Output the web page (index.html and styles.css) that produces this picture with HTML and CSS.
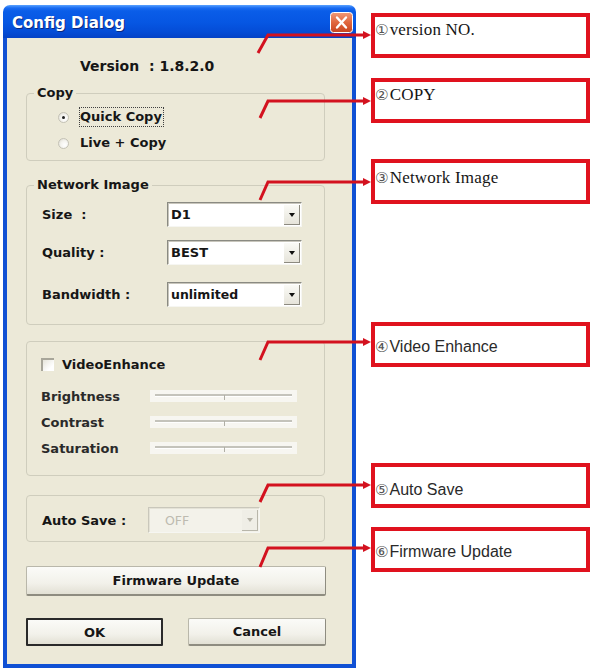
FILE: index.html
```html
<!DOCTYPE html>
<html>
<head>
<meta charset="utf-8">
<link rel="stylesheet" href="styles.css">
</head>
<body>
<div class="page">
  <div class="dialog">
    <div class="titlebar">
      <span class="title">Config Dialog</span>
      <span class="close">
        <svg width="23" height="21" viewBox="0 0 23 21">
          <defs>
            <linearGradient id="cg" x1="0" y1="0" x2="0" y2="1">
              <stop offset="0" stop-color="#f09a78"/>
              <stop offset="0.5" stop-color="#e0663e"/>
              <stop offset="1" stop-color="#c8451f"/>
            </linearGradient>
          </defs>
          <rect x="0.5" y="0.5" width="22" height="20" rx="3" fill="url(#cg)" stroke="#ffffff" stroke-width="1"/>
          <path d="M7 5.5 L16 15.5 M16 5.5 L7 15.5" stroke="#ffffff" stroke-width="2.4" stroke-linecap="round"/>
        </svg>
      </span>
    </div>
    <div class="body">
      <div class="version">Version&nbsp; : 1.8.2.0</div>

      <fieldset class="group group-copy">
        <legend>Copy</legend>
        <div class="copy-inner">
          <div class="radio-row"><span class="radio checked"></span><span class="focus">Quick Copy</span></div>
          <div class="radio-row"><span class="radio"></span><span class="radio-text">Live + Copy</span></div>
        </div>
      </fieldset>

      <fieldset class="group group-net">
        <legend>Network Image</legend>
        <div class="net-inner">
          <div class="net-row"><span class="net-label">Size&nbsp; :</span><span class="combo"><span class="combo-text">D1</span><span class="combo-btn"><span class="tri"></span></span></span></div>
          <div class="net-row"><span class="net-label">Quality :</span><span class="combo"><span class="combo-text">BEST</span><span class="combo-btn"><span class="tri"></span></span></span></div>
          <div class="net-row"><span class="net-label">Bandwidth :</span><span class="combo"><span class="combo-text small">unlimited</span><span class="combo-btn"><span class="tri"></span></span></span></div>
        </div>
      </fieldset>

      <div class="group group-video">
        <div class="check-row"><span class="checkbox"></span><span>VideoEnhance</span></div>
        <div class="slider-row"><span class="slider-label">Brightness</span><span class="slider"><span class="groove"></span><span class="thumb"></span></span></div>
        <div class="slider-row"><span class="slider-label">Contrast</span><span class="slider"><span class="groove"></span><span class="thumb"></span></span></div>
        <div class="slider-row"><span class="slider-label">Saturation</span><span class="slider"><span class="groove"></span><span class="thumb"></span></span></div>
      </div>

      <div class="group group-save">
        <span class="save-label">Auto Save :</span>
        <span class="combo combo-disabled"><span class="combo-text">OFF</span><span class="combo-btn"><span class="tri"></span></span></span>
      </div>

      <div class="btn btn-wide">Firmware Update</div>

      <div class="btn-row">
        <div class="btn btn-ok">OK</div>
        <div class="btn btn-cancel">Cancel</div>
      </div>
    </div>
  </div>

  <div class="callouts">
    <div class="callout c1 serif"><span class="num">①</span>version NO.</div>
    <div class="callout c2 serif"><span class="num">②</span>COPY</div>
    <div class="callout c3 serif"><span class="num">③</span>Network Image</div>
    <div class="callout c4 sans"><span class="num">④</span>Video Enhance</div>
    <div class="callout c5 sans"><span class="num">⑤</span>Auto Save</div>
    <div class="callout c6 sans"><span class="num">⑥</span>Firmware Update</div>
  </div>
</div>

<svg class="leaders" width="592" height="670" viewBox="0 0 592 670">
  <g fill="none" stroke="#d3121f" stroke-width="3" stroke-linejoin="miter">
    <polyline points="258,53 268,35 365,35"/>
    <polyline points="260,118 268,101 365,101"/>
    <polyline points="260,200 268,182 365,182"/>
    <polyline points="260,360 268,342 365,342"/>
    <polyline points="260,502 268,485 365,485"/>
    <polyline points="260,567 268,548 365,548"/>
  </g>
  <g fill="#d3121f">
    <polygon points="363,31 371,35 363,39"/>
    <polygon points="363,97 371,101 363,105"/>
    <polygon points="363,178 371,182 363,186"/>
    <polygon points="363,338 371,342 363,346"/>
    <polygon points="363,481 371,485 363,489"/>
    <polygon points="363,544 371,548 363,552"/>
  </g>
</svg>
</body>
</html>
```

FILE: styles.css
```css
* { box-sizing: border-box; }

html, body {
  margin: 0;
  padding: 0;
  background: #ffffff;
}

body {
  width: 592px;
  height: 670px;
  overflow: hidden;
  position: relative;
  font-family: "DejaVu Sans", sans-serif;
  font-size: 13px;
  font-weight: bold;
  color: #161616;
}

.page {
  display: flex;
  align-items: flex-start;
  padding: 5px 0 0 3px;
}

/* ---------- dialog ---------- */
.dialog {
  width: 353px;
  height: 663px;
  display: flex;
  flex-direction: column;
  flex: none;
}

.titlebar {
  height: 33px;
  flex: none;
  border-radius: 7px 7px 0 0;
  background: linear-gradient(to bottom, #5aa2ff 0px, #1a6cf2 3px, #0a5de8 6px, #0656e2 18px, #044cd6 27px, #0442c6 33px);
  display: flex;
  align-items: flex-start;
  justify-content: space-between;
  padding: 0 3px 0 9px;
}

.title {
  margin-top: 9px;
  font-size: 15px;
  line-height: 18px;
  color: #ffffff;
  text-shadow: 1px 1px 0 #0a2a80;
}

.close {
  margin-top: 7px;
  width: 23px;
  height: 21px;
  display: block;
}
.close svg { display: block; }

.body {
  flex: 1;
  background: #ece9d8;
  border: 4px solid #1050d4;
  border-top: none;
  padding: 0 0 0 19px;
  display: flex;
  flex-direction: column;
  align-items: flex-start;
}

.version {
  margin-top: 18px;
  margin-left: 54px;
  line-height: 20px;
  font-size: 14px;
}

/* ---------- group boxes ---------- */
.group {
  margin: 0;
  width: 299px;
  border: 1px solid #cfcdbd;
  border-radius: 4px;
  padding: 0;
  min-inline-size: 0;
}

.group legend {
  margin-left: 7px;
  padding: 0 3px;
  line-height: 16px;
  font-size: 13px;
}

.group-copy { margin-top: 9px; }

.copy-inner {
  padding: 3px 0 4px 31px;
}

.radio-row {
  height: 26px;
  display: flex;
  align-items: center;
}

.radio {
  width: 11px;
  height: 11px;
  border-radius: 50%;
  background: radial-gradient(circle at 65% 65%, #ffffff 0, #f4f3ee 50%, #d8d6cc 100%);
  border: 1px solid #c4c2b6;
  margin-right: 10px;
  position: relative;
  flex: none;
}
.radio.checked::after {
  content: "";
  position: absolute;
  left: 3px;
  top: 3px;
  width: 3px;
  height: 3px;
  border-radius: 50%;
  background: #202020;
}

.focus {
  border: 1px dotted #404040;
  line-height: 18px;
  padding: 0 1px 0 0;
}
.radio-text {
  margin-left: 1px;
  line-height: 18px;
}

.group-net { margin-top: 16px; }

.net-inner {
  padding: 9px 0 17px 15px;
  display: flex;
  flex-direction: column;
}
.net-row {
  display: flex;
  align-items: center;
  height: 25px;
}
.net-row + .net-row { margin-top: 13px; }
.net-row:last-child { margin-top: 17px; }

.net-label {
  width: 125px;
  flex: none;
}

/* ---------- combo boxes ---------- */
.combo {
  width: 135px;
  height: 25px;
  flex: none;
  display: flex;
  align-items: center;
  justify-content: space-between;
  background: #ffffff;
  border-top: 1px solid #8a8a82;
  border-left: 1px solid #8a8a82;
  border-right: 1px solid #f6f6f2;
  border-bottom: 1px solid #f6f6f2;
  box-shadow: inset 1px 1px 0 #c8c6bc;
  padding: 2px 1px 1px 3px;
}
.combo-text { line-height: 18px; }
.combo-text.small { font-size: 12.5px; }

.combo-btn {
  width: 16px;
  height: 20px;
  flex: none;
  background: linear-gradient(to bottom, #fafaf6, #e6e4da);
  border-right: 1px solid #8c8a80;
  border-bottom: 1px solid #8c8a80;
  display: flex;
  align-items: center;
  justify-content: center;
}
.tri {
  width: 0;
  height: 0;
  border-left: 3px solid transparent;
  border-right: 3px solid transparent;
  border-top: 4px solid #101010;
}

.combo-disabled {
  width: 112px;
  height: 26px;
  background: #f3f2ea;
  border-top: 1px solid #c9c7bb;
  border-left: 1px solid #c9c7bb;
  box-shadow: inset 1px 1px 0 #e4e2d6;
  padding-left: 16px;
}
.combo-disabled .combo-text {
  color: #bdbbb0;
  font-weight: normal;
  font-size: 12.5px;
}
.combo-disabled .combo-btn {
  height: 21px;
  background: #efeee6;
  border-right: 1px solid #b8b6aa;
  border-bottom: 1px solid #b8b6aa;
}
.combo-disabled .tri { border-top-color: #b4b2a6; }

/* ---------- video enhance ---------- */
.group-video {
  margin-top: 16px;
  padding: 12px 0 14px 14px;
}

.check-row {
  height: 20px;
  display: flex;
  align-items: center;
  margin-bottom: 9px;
}
.checkbox {
  width: 13px;
  height: 13px;
  flex: none;
  background: linear-gradient(135deg, #e6e4da, #ffffff 70%);
  border-top: 2px solid #a8a69a;
  border-left: 2px solid #a8a69a;
  margin-right: 8px;
}

.slider-row {
  height: 26px;
  display: flex;
  align-items: center;
}
.slider-label {
  width: 109px;
  flex: none;
  color: #2a2a2a;
}
.slider {
  position: relative;
  width: 147px;
  height: 12px;
  background: #f7f6f1;
}
.groove {
  position: absolute;
  left: 5px;
  right: 5px;
  top: 4px;
  height: 3px;
  border-top: 2px solid #c4c3bb;
  border-bottom: 1px solid #ffffff;
}
.thumb {
  position: absolute;
  left: 74px;
  top: 5px;
  width: 1px;
  height: 5px;
  background: #b0afa6;
}

/* ---------- auto save ---------- */
.group-save {
  margin-top: 19px;
  padding: 11px 0 8px 15px;
  display: flex;
  align-items: center;
}
.save-label {
  width: 106px;
  flex: none;
}

/* ---------- buttons ---------- */
.btn {
  display: flex;
  align-items: center;
  justify-content: center;
  background: linear-gradient(to bottom, #fbfbf8 0%, #f2f1ea 60%, #e2e0d4 100%);
  border: 1px solid #b9b7aa;
  border-right-color: #8e8c80;
  border-bottom: 2px solid #8e8c80;
  border-radius: 2px;
}
.btn-wide {
  margin-top: 24px;
  width: 300px;
  height: 30px;
}
.btn-row {
  margin-top: 22px;
  display: flex;
}
.btn-ok {
  width: 137px;
  height: 28px;
  border: 2px solid #2a2a2a;
  border-radius: 1px;
}
.btn-cancel {
  margin-left: 25px;
  width: 138px;
  height: 28px;
}

/* ---------- callouts ---------- */
.callouts {
  margin-left: 15px;
  margin-top: 8px;
  display: flex;
  flex-direction: column;
}
.callout {
  width: 219px;
  height: 45px;
  border: 4px solid #e0121e;
  padding-left: 0;
  font-weight: normal;
  color: #151515;
  white-space: nowrap;
  line-height: 20px;
}
.serif {
  font-family: "Liberation Serif", serif;
  font-size: 17px;
  letter-spacing: 0.2px;
}
.sans {
  font-family: "Liberation Sans", sans-serif;
  font-size: 16px;
  color: #2a2a2a;
}
.num {
  font-family: "DejaVu Sans", sans-serif;
  font-size: 15px;
  font-weight: normal;
  color: #555;
  margin-right: 1px;
}

.c1 { padding-top: 3px; }
.c2 { margin-top: 20px; padding-top: 3px; }
.c3 { margin-top: 36px; padding-top: 5px; }
.c4 { margin-top: 118px; padding-top: 11px; }
.c5 { margin-top: 96px; padding-top: 13px; }
.c6 { margin-top: 19px; padding-top: 11px; }

/* ---------- leader lines overlay ---------- */
.leaders {
  position: absolute;
  left: 0;
  top: 0;
  pointer-events: none;
}
```
